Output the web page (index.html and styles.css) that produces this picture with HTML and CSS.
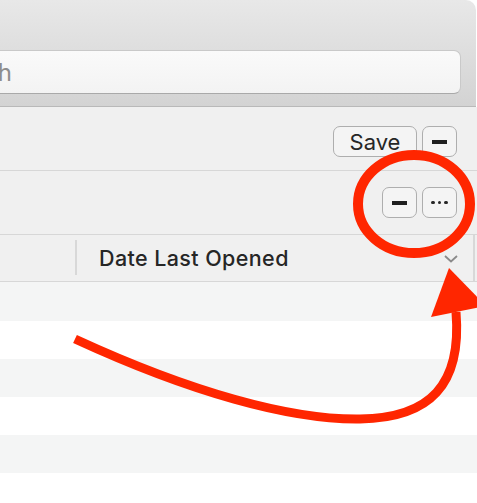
FILE: index.html
```html
<!DOCTYPE html>
<html>
<head>
<meta charset="utf-8">
<link rel="stylesheet" href="styles.css">
</head>
<body>
<div class="window">
  <div class="toolbar">
    <div class="search"><span class="search-text">Search</span></div>
  </div>
  <div class="bar bar-one">
    <button class="btn btn-save">Save</button>
    <button class="btn btn-icon"><span class="minus"></span></button>
  </div>
  <div class="bar bar-two">
    <button class="btn btn-icon"><span class="minus"></span></button>
    <button class="btn btn-icon"><span class="dots"><i></i><i></i><i></i></span></button>
  </div>
  <div class="header">
    <div class="col col-first"></div>
    <div class="col col-date">
      <span class="col-title">Date Last Opened</span>
      <svg class="chevron" width="14" height="8" viewBox="0 0 14 8"><path d="M1 1 L7 6.5 L13 1" fill="none" stroke="#8a8a8a" stroke-width="1.8"/></svg>
    </div>
  </div>
  <div class="rows">
    <div class="r r-first alt"></div>
    <div class="r"></div>
    <div class="r alt"></div>
    <div class="r"></div>
    <div class="r alt"></div>
    <div class="r"></div>
  </div>
</div>
<svg class="annot" width="477" height="503" viewBox="0 0 477 503">
  <ellipse cx="414" cy="204" rx="56" ry="49" fill="none" stroke="#ff2600" stroke-width="10"/>
  <path d="M75 339 C190 392 290 420 360 419 C430 418 462 385 456 312" fill="none" stroke="#ff2600" stroke-width="9"/>
  <polygon points="449,268 431,317 486,306" fill="#ff2600"/>
</svg>
</body>
</html>
```

FILE: styles.css
```css
html, body {
  margin: 0;
  padding: 0;
}
body {
  width: 477px;
  height: 503px;
  overflow: hidden;
  background: #ffffff;
  font-family: "Inter", "Helvetica Neue", Arial, sans-serif;
  position: relative;
}
.window {
  width: 477px;
}
.toolbar {
  width: 476px;
  height: 107px;
  box-sizing: border-box;
  padding-top: 50px;
  background: linear-gradient(#e8e8e8, #d3d3d3);
  border-bottom: 1px solid #b9b9b9;
  border-top-right-radius: 10px;
  display: flex;
  justify-content: flex-end;
}
.search {
  flex: 0 0 600px;
  width: 600px;
  height: 44px;
  box-sizing: border-box;
  margin-right: 15px;
  background: linear-gradient(#fafafa, #f3f3f3);
  border: 1px solid #c9c9c9;
  border-bottom-color: #a9a9a9;
  border-radius: 7px;
  display: flex;
  align-items: center;
  justify-content: flex-start;
  overflow: hidden;
}
.search-text {
  flex: 0 0 150px;
  width: 150px;
  text-align: right;
  font-size: 24px;
  color: #8d8d8d;
  white-space: nowrap;
}
.bar {
  height: 64px;
  box-sizing: border-box;
  background: #f0f0f0;
  border-bottom: 1px solid #d7d7d7;
  display: flex;
  justify-content: flex-end;
  align-items: flex-start;
  gap: 5px;
  padding-right: 20px;
}
.bar-one {
  padding-top: 19px;
}
.bar-two {
  padding-top: 16px;
}
.btn {
  height: 31px;
  box-sizing: border-box;
  border: 1.5px solid #aeaeae;
  border-radius: 7px;
  background: #f4f4f4;
  padding: 0;
  margin: 0;
  display: flex;
  align-items: center;
  justify-content: center;
  font-family: inherit;
  color: #262626;
}
.btn-save {
  width: 84px;
  font-size: 22px;
  line-height: 1;
}
.btn-icon {
  width: 35px;
}
.minus {
  display: block;
  width: 15px;
  height: 4px;
  background: #1f1f1f;
}
.dots {
  display: flex;
  gap: 3px;
}
.dots i {
  display: block;
  width: 3.5px;
  height: 3.5px;
  border-radius: 50%;
  background: #262626;
}
.header {
  height: 47px;
  box-sizing: border-box;
  background: #f0f0f0;
  border-bottom: 1px solid #d7d7d7;
  display: flex;
}
.col {
  height: 100%;
  box-sizing: border-box;
  display: flex;
  align-items: center;
}
.col-first {
  width: 77px;
  border-right: 2px solid #d8d8d8;
  margin: 5px 0 6px 0;
  height: auto;
}
.col-date {
  width: 398px;
  padding-left: 22px;
  border-right: 2px solid #d8d8d8;
  position: relative;
}
.col-title {
  font-size: 21.5px;
  font-weight: 500;
  color: #262626;
  letter-spacing: 0.4px;
}
.chevron {
  position: absolute;
  right: 15px;
  top: 20px;
}
.r {
  height: 38px;
  background: #ffffff;
}
.r.alt {
  background: #f4f5f5;
}
.r-first {
  height: 39px;
}
.annot {
  position: absolute;
  left: 0;
  top: 0;
  pointer-events: none;
}
```
